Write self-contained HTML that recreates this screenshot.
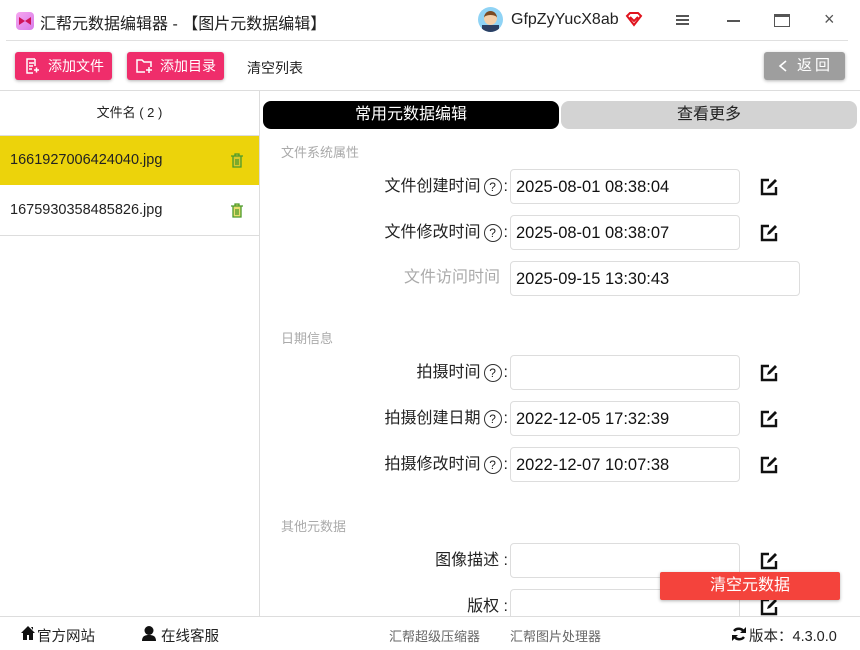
<!DOCTYPE html><html><head><meta charset="utf-8"><style>
*{margin:0;padding:0;box-sizing:border-box}
body{width:860px;height:650px;overflow:hidden;background:#fff;font-family:"Liberation Sans","Noto Sans CJK SC",sans-serif;color:#222;position:relative}
.a{position:absolute}
.btn{position:absolute;top:52px;height:28px;background:#ef2d6b;color:#fff;border-radius:3px;font-size:14px;line-height:28px;box-shadow:0 1px 3px rgba(0,0,0,.3)}
.sec{position:absolute;left:281px;font-size:13px;color:#aaa}
.lbl{position:absolute;right:352px;font-size:16px;line-height:20px;height:20px;color:#222;text-align:right;white-space:nowrap}
.q{display:inline-block;width:18px;height:18px;border:1.3px solid #333;border-radius:50%;font-size:12px;line-height:16px;text-align:center;vertical-align:top;margin:1px 2px 0 3px}
.inp{position:absolute;left:510px;width:230px;height:35px;border:1px solid #ddd;border-radius:4px;font-size:16.5px;line-height:35px;padding-left:5px;color:#111}
.ed{position:absolute;left:760px;width:18px;height:18px}
</style></head><body>
<div class="a" style="left:16px;top:12px;width:18px;height:18px;border-radius:4px;background:linear-gradient(135deg,#f6a6f0,#d77be9)"><svg width="18" height="18"><path d="M3 5l6 4 6-4v8l-6-4-6 4z" fill="#d0145a"/></svg></div>
<div class="a" style="left:40px;top:10px;font-size:16px">汇帮元数据编辑器 - 【图片元数据编辑】</div>
<div class="a" style="left:478px;top:7px;width:25px;height:25px;border-radius:50%;background:#8fd3f5;overflow:hidden"><div class="a" style="left:6px;top:4px;width:13px;height:14px;border-radius:50%;background:#f3cfa9;border-top:4px solid #7a4a22"></div><div class="a" style="left:4px;top:18px;width:17px;height:8px;background:#2b3f63"></div></div>
<div class="a" style="left:511px;top:11px;font-size:16px">GfpZyYucX8ab</div>
<svg class="a" style="left:625px;top:11px" width="18" height="16"><path d="M2 5l3-3h8l3 3-7 9z M5 6l4 4 4-4" fill="none" stroke="#e0141e" stroke-width="2"/></svg>
<div class="a" style="left:676px;top:15px;width:13px;height:2px;background:#555;box-shadow:0 4px 0 #555,0 8px 0 #555"></div>
<div class="a" style="left:727px;top:20px;width:13px;height:2px;background:#555"></div>
<div class="a" style="left:774px;top:14px;width:16px;height:13px;border:1.5px solid #555;border-top-width:3px"></div>
<div class="a" style="left:824px;top:9px;font-size:18px;color:#555">×</div>
<div class="a" style="left:6px;top:40px;width:418px;height:1px;background:#e0e0e0"></div>
<div class="a" style="left:424px;top:40px;width:424px;height:1px;background:#e0e0e0"></div>
<div class="btn" style="left:15px;width:97px;padding-left:33px">添加文件<svg class="a" style="left:9px;top:6px" width="16" height="16"><path d="M11 1H3v14h6M11 1v7M5 5h5M5 8h4M5 11h3M10 12h5M12.5 9.5v5" fill="none" stroke="#fff" stroke-width="1.5"/></svg></div>
<div class="btn" style="left:127px;width:97px;padding-left:33px">添加目录<svg class="a" style="left:9px;top:6px" width="17" height="16"><path d="M9 14H1V2h5l2 2h7v5M10 12h6M13 9v6" fill="none" stroke="#fff" stroke-width="1.5"/></svg></div>
<div class="a" style="left:247px;top:58px;font-size:14px">清空列表</div>
<div class="a" style="left:764px;top:52px;width:81px;height:28px;background:#9e9e9e;color:#fff;border-radius:3px;font-size:15px;line-height:28px;padding-left:33px;letter-spacing:3px;box-shadow:0 1px 3px rgba(0,0,0,.3)">返回<svg class="a" style="left:14px;top:8px" width="10" height="12"><path d="M8 1L2 6l6 5" fill="none" stroke="#fff" stroke-width="1.6"/></svg></div>
<div class="a" style="left:0;top:90px;width:860px;height:1px;background:#ddd"></div>
<div class="a" style="left:259px;top:90px;width:1px;height:526px;background:#ddd"></div>
<div class="a" style="left:0;top:102px;width:259px;text-align:center;font-size:13px">文件名 ( 2 )</div>
<div class="a" style="left:0;top:135px;width:259px;height:1px;background:#ddd"></div>
<div class="a" style="left:0;top:136px;width:259px;height:49px;background:#ecd30b"></div>
<div class="a" style="left:10px;top:152px;font-size:14.5px">1661927006424040.jpg</div>
<div class="a" style="left:10px;top:202px;font-size:14.5px">1675930358485826.jpg</div>
<svg class="a" style="left:230px;top:153px" width="14" height="15"><path d="M1 3h12M5 3V1h4v2M3 3v11h8V3M6 6v6M8 6v6" fill="#d8c82b" stroke="#4c9a2a" stroke-width="1.3"/></svg>
<svg class="a" style="left:230px;top:203px" width="14" height="15"><path d="M1 3h12M5 3V1h4v2M3 3v11h8V3M6 6v6M8 6v6" fill="#e8dd70" stroke="#4c9a2a" stroke-width="1.3"/></svg>
<div class="a" style="left:0;top:235px;width:259px;height:1px;background:#ddd"></div>
<div class="a" style="left:263px;top:101px;width:296px;height:28px;background:#000;color:#fff;border-radius:8px;text-align:center;font-size:16px;line-height:28px">常用元数据编辑</div>
<div class="a" style="left:561px;top:101px;width:296px;height:28px;background:#d3d3d3;border-radius:8px;text-align:center;font-size:16px;line-height:28px">查看更多</div>
<div class="sec" style="top:142px">文件系统属性</div>
<div class="sec" style="top:328px">日期信息</div>
<div class="sec" style="top:516px">其他元数据</div>
<div class="lbl" style="top:177px">文件创建时间<span class="q">?</span>:</div>
<div class="inp" style="top:169px">2025-08-01 08:38:04</div>
<div class="lbl" style="top:223px">文件修改时间<span class="q">?</span>:</div>
<div class="inp" style="top:215px">2025-08-01 08:38:07</div>
<div class="lbl" style="top:268px;right:360px;color:#aaa">文件访问时间</div>
<div class="inp" style="top:261px;width:290px">2025-09-15 13:30:43</div>
<div class="lbl" style="top:363px">拍摄时间<span class="q">?</span>:</div>
<div class="inp" style="top:355px"></div>
<div class="lbl" style="top:409px">拍摄创建日期<span class="q">?</span>:</div>
<div class="inp" style="top:401px">2022-12-05 17:32:39</div>
<div class="lbl" style="top:455px">拍摄修改时间<span class="q">?</span>:</div>
<div class="inp" style="top:447px">2022-12-07 10:07:38</div>
<div class="lbl" style="top:551px">图像描述 :</div>
<div class="inp" style="top:543px"></div>
<div class="lbl" style="top:597px">版权 :</div>
<div class="inp" style="top:589px"></div>
<svg class="ed" style="top:178px" viewBox="0 0 18 18"><path d="M9 2H2v14h14V9" fill="none" stroke="#111" stroke-width="2.4"/><path d="M7 11l1-3 7-7 2 2-7 7z" fill="#111"/></svg>
<svg class="ed" style="top:224px" viewBox="0 0 18 18"><path d="M9 2H2v14h14V9" fill="none" stroke="#111" stroke-width="2.4"/><path d="M7 11l1-3 7-7 2 2-7 7z" fill="#111"/></svg>
<svg class="ed" style="top:364px" viewBox="0 0 18 18"><path d="M9 2H2v14h14V9" fill="none" stroke="#111" stroke-width="2.4"/><path d="M7 11l1-3 7-7 2 2-7 7z" fill="#111"/></svg>
<svg class="ed" style="top:410px" viewBox="0 0 18 18"><path d="M9 2H2v14h14V9" fill="none" stroke="#111" stroke-width="2.4"/><path d="M7 11l1-3 7-7 2 2-7 7z" fill="#111"/></svg>
<svg class="ed" style="top:456px" viewBox="0 0 18 18"><path d="M9 2H2v14h14V9" fill="none" stroke="#111" stroke-width="2.4"/><path d="M7 11l1-3 7-7 2 2-7 7z" fill="#111"/></svg>
<svg class="ed" style="top:552px" viewBox="0 0 18 18"><path d="M9 2H2v14h14V9" fill="none" stroke="#111" stroke-width="2.4"/><path d="M7 11l1-3 7-7 2 2-7 7z" fill="#111"/></svg>
<svg class="ed" style="top:598px" viewBox="0 0 18 18"><path d="M9 2H2v14h14V9" fill="none" stroke="#111" stroke-width="2.4"/><path d="M7 11l1-3 7-7 2 2-7 7z" fill="#111"/></svg>
<div class="a" style="left:660px;top:572px;width:180px;height:28px;background:#f4433c;color:#fff;font-size:16px;text-align:center;line-height:28px;border-radius:2px;box-shadow:0 1px 3px rgba(0,0,0,.3)">清空元数据</div>
<div class="a" style="left:0;top:616px;width:860px;height:34px;background:#fff;border-top:1px solid #ddd"></div>
<svg class="a" style="left:20px;top:625px" width="16" height="16"><path d="M1 8L8 1l7 7h-2v7H9v-5H7v5H3V8z M11 2h2v3" fill="#111"/></svg>
<div class="a" style="left:37px;top:625px;font-size:14.5px">官方网站</div>
<svg class="a" style="left:141px;top:625px" width="16" height="16"><circle cx="8" cy="5.5" r="4.5" fill="#111"/><path d="M1 16c0-5 3-6 7-6s7 1 7 6z" fill="#111"/></svg>
<div class="a" style="left:161px;top:625px;font-size:14.5px">在线客服</div>
<div class="a" style="left:389px;top:626px;font-size:13px;color:#666">汇帮超级压缩器</div>
<div class="a" style="left:510px;top:626px;font-size:13px;color:#666">汇帮图片处理器</div>
<svg class="a" style="left:731px;top:626px" width="16" height="16"><path d="M13 6A6 6 0 0 0 3 5M3 10a6 6 0 0 0 10 1" fill="none" stroke="#111" stroke-width="2.5"/><path d="M15 1v6H9zM1 15V9h6z" fill="#111"/></svg>
<div class="a" style="left:749px;top:625px;font-size:14.5px">版本：4.3.0.0</div>
</body></html>
